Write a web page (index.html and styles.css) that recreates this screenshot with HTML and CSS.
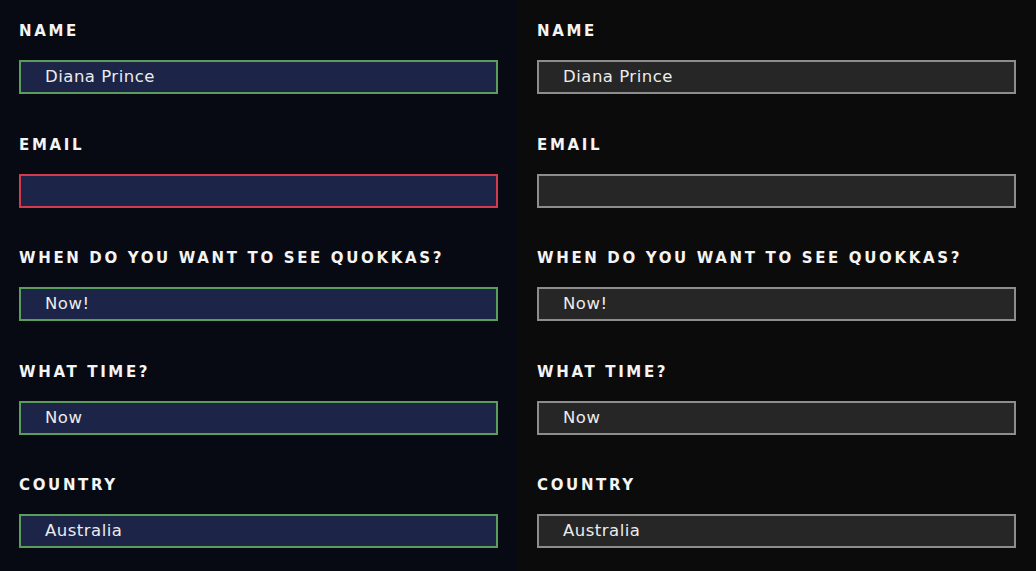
FILE: index.html
```html
<!DOCTYPE html>
<html>
<head>
<meta charset="utf-8">
<link rel="stylesheet" href="styles.css">
</head>
<body>
<div class="page">
  <form class="col col-theme-a">
    <div class="field"><label class="label">Name</label><div class="input ok">Diana Prince</div></div>
    <div class="field"><label class="label">Email</label><div class="input bad"></div></div>
    <div class="field"><label class="label">When do you want to see quokkas?</label><div class="input ok">Now!</div></div>
    <div class="field"><label class="label">What time?</label><div class="input ok">Now</div></div>
    <div class="field"><label class="label">Country</label><div class="input ok">Australia</div></div>
  </form>
  <form class="col col-theme-b">
    <div class="field"><label class="label">Name</label><div class="input">Diana Prince</div></div>
    <div class="field"><label class="label">Email</label><div class="input"></div></div>
    <div class="field"><label class="label">When do you want to see quokkas?</label><div class="input">Now!</div></div>
    <div class="field"><label class="label">What time?</label><div class="input">Now</div></div>
    <div class="field"><label class="label">Country</label><div class="input">Australia</div></div>
  </form>
</div>
</body>
</html>
```
FILE: styles.css
```css
html, body { margin: 0; padding: 0; }
body { width: 1036px; height: 571px; overflow: hidden; font-family: "DejaVu Sans", "Open Sans", sans-serif; }
.page { display: grid; grid-template-columns: 518px 518px; height: 571px; }
.col { margin: 0; padding: 20px 20px 0 19px; display: flex; flex-direction: column; gap: 39.5px; }
.col-theme-a { background: #070a13; }
.col-theme-b { background: #0b0b0b; }
.field { display: flex; flex-direction: column; gap: 19px; }
.label { display: block; color: #f4f4f4; font-weight: 700; font-size: 15px; letter-spacing: 2.65px; text-transform: uppercase; line-height: 20px; padding-top: 1px; }
.input { box-sizing: border-box; height: 34px; border: 2px solid #8d8d8d; background: #262626; color: #ececec; font-size: 16.5px; letter-spacing: 0.5px; line-height: 30px; padding-left: 24px; }
.col-theme-a .input { background: #1c2448; }
.input.ok { border-color: #5c9d5e; }
.input.bad { border-color: #d43a4d; }
```
